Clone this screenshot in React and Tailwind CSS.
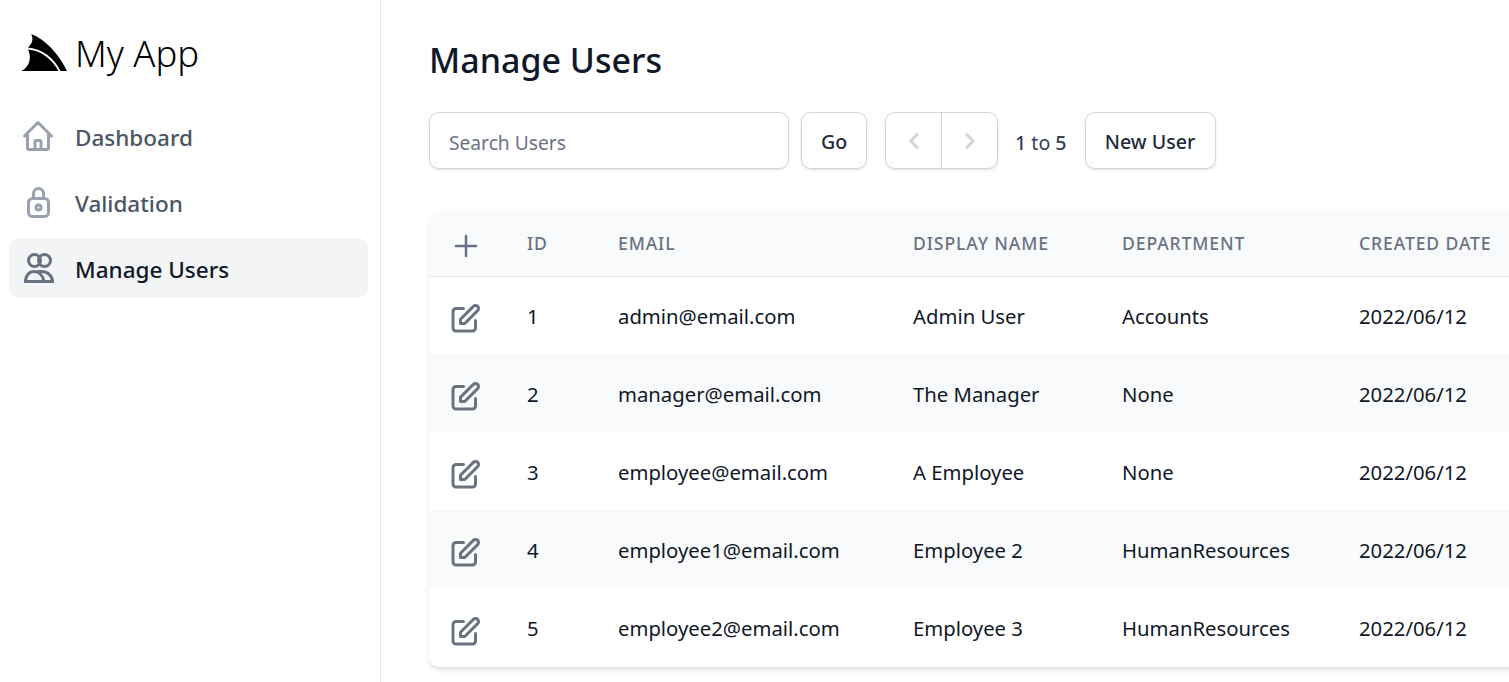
import React from "react";
import { HiOutlineHome, HiOutlinePlus, HiOutlinePencilAlt } from "react-icons/hi";
import { ChevronLeft, ChevronRight } from "lucide-react";

const users = [
  { id: 1, email: "admin@email.com", name: "Admin User", dept: "Accounts" },
  { id: 2, email: "manager@email.com", name: "The Manager", dept: "None" },
  { id: 3, email: "employee@email.com", name: "A Employee", dept: "None" },
  { id: 4, email: "employee1@email.com", name: "Employee 2", dept: "HumanResources" },
  { id: 5, email: "employee2@email.com", name: "Employee 3", dept: "HumanResources" },
];

const Logo = () => (
  <svg viewBox="0 0 46 38" className="w-[46px] h-[38px] shrink-0">
    <path d="M10 0C24 5 38 20 46 37H39.5C33 24 22 15 7 13.5C11 10 13 5 10 0Z" fill="#000" />
    <path d="M7 15.5C20 16.5 31 25 37.5 37H0C6 35 12 26 7 15.5Z" fill="#000" />
  </svg>
);

const LockIcon = ({ className }) => (
  <svg viewBox="0 0 36 36" fill="none" stroke="currentColor" strokeWidth="3" className={className}>
    <rect x="8.5" y="14.5" width="20" height="18" rx="4" />
    <path d="M13.5 14.5V9.5a5 5 0 0 1 10 0v5" />
    <circle cx="18.5" cy="23.5" r="2.5" />
  </svg>
);

const UsersIcon = ({ className }) => (
  <svg viewBox="0 0 36 36" fill="none" stroke="currentColor" strokeWidth="3" strokeLinejoin="round" strokeLinecap="round" className={className}>
    <circle cx="14.5" cy="10.5" r="6" />
    <circle cx="24.5" cy="10.5" r="6" />
    <path d="M5.5 31.5h27" />
    <path d="M5.5 31.5c0-6 4-10 8.5-10c5 0 9 4 10 10" />
    <path d="M18 21.5h4c6 0 10.5 5 10.5 10" />
  </svg>
);

const NavItem = ({ icon, label, active }) => (
  <div className={`flex items-center h-[60px] pl-[11px] rounded-[10px] text-[22.5px] font-medium ${active ? "bg-gray-100 text-gray-900" : "text-gray-600"}`}>
    {icon}
    <span className="ml-[19px] pt-[3px]">{label}</span>
  </div>
);

export default function App() {
  return (
    <div className="flex h-screen overflow-hidden bg-white font-['Noto_Sans',sans-serif] text-gray-900">
      <aside className="w-[381px] shrink-0 border-r border-gray-200 pl-[9px] pr-[12px]">
        <div className="flex items-center h-[106px] pl-[12px]">
          <Logo />
          <span className="ml-[8px] text-[36.4px] font-light text-black">My App</span>
        </div>
        <div className="flex flex-col gap-[6px]">
          <NavItem label="Dashboard" icon={<HiOutlineHome className="w-[36px] h-[36px] text-gray-400" />} />
          <NavItem label="Validation" icon={<LockIcon className="w-[36px] h-[36px] text-gray-400" />} />
          <NavItem active label="Manage Users" icon={<UsersIcon className="w-[36px] h-[36px] text-gray-500" />} />
        </div>
      </aside>

      <main className="flex-1 min-w-0 pl-[48px] pt-[35px]">
        <h1 className="text-[34px] leading-[50px] font-medium">Manage Users</h1>

        <div className="flex items-center mt-[27px] text-[19.6px]">
          <input placeholder="Search Users" className="w-[360px] h-[57px] px-[19px] pt-[4px] text-[19.2px] rounded-[10px] border border-gray-300 shadow-sm placeholder:text-gray-500 outline-none" />
          <button className="ml-[12px] w-[66px] h-[57px] pt-[3px] rounded-[10px] border border-gray-300 shadow-sm font-medium text-gray-800">Go</button>
          <div className="ml-[18px] flex h-[57px] rounded-[10px] border border-gray-300 shadow-sm text-gray-300">
            <div className="w-[56px] flex items-center justify-center border-r border-gray-300">
              <ChevronLeft size={26} strokeWidth={2.6} />
            </div>
            <div className="w-[55px] flex items-center justify-center">
              <ChevronRight size={26} strokeWidth={2.6} />
            </div>
          </div>
          <span className="ml-[17px] pt-[4px] text-gray-700">
            <b className="font-medium">1</b> to <b className="font-medium">5</b>
          </span>
          <button className="ml-[18px] w-[131px] h-[57px] pt-[3px] rounded-[10px] border border-gray-300 shadow-sm font-medium text-gray-800">New User</button>
        </div>

        <div className="mt-[41px] w-[1300px] rounded-[10px] shadow-md overflow-hidden">
          <table className="w-full table-fixed text-left">
            <colgroup>
              <col className="w-[76px]" />
              <col className="w-[91px]" />
              <col className="w-[295px]" />
              <col className="w-[209px]" />
              <col className="w-[237px]" />
              <col />
            </colgroup>
            <thead className="bg-gray-50 border-b border-gray-200">
              <tr className="h-[66px] text-[17.6px] font-medium text-gray-500 tracking-wider uppercase">
                <th className="pl-[22px] pt-[6px] font-medium"><HiOutlinePlus className="w-[30px] h-[30px]" /></th>
                <th className="px-[22px] font-medium">ID</th>
                <th className="px-[22px] font-medium">Email</th>
                <th className="px-[22px] font-medium">Display Name</th>
                <th className="px-[22px] font-medium">Department</th>
                <th className="px-[22px] font-medium">Created Date</th>
              </tr>
            </thead>
            <tbody className="text-[20.3px]">
              {users.map((u) => (
                <tr key={u.id} className="h-[78px] last:h-[79px] even:bg-gray-50">
                  <td className="pl-[18px] pt-[8px]"><HiOutlinePencilAlt className="w-[36px] h-[36px] text-gray-500" /></td>
                  <td className="px-[22px] pt-[2px]">{u.id}</td>
                  <td className="px-[22px] pt-[2px]">{u.email}</td>
                  <td className="px-[22px] pt-[2px]">{u.name}</td>
                  <td className="px-[22px] pt-[2px]">{u.dept}</td>
                  <td className="px-[22px] pt-[2px]">2022/06/12</td>
                </tr>
              ))}
            </tbody>
          </table>
        </div>
      </main>
    </div>
  );
}
